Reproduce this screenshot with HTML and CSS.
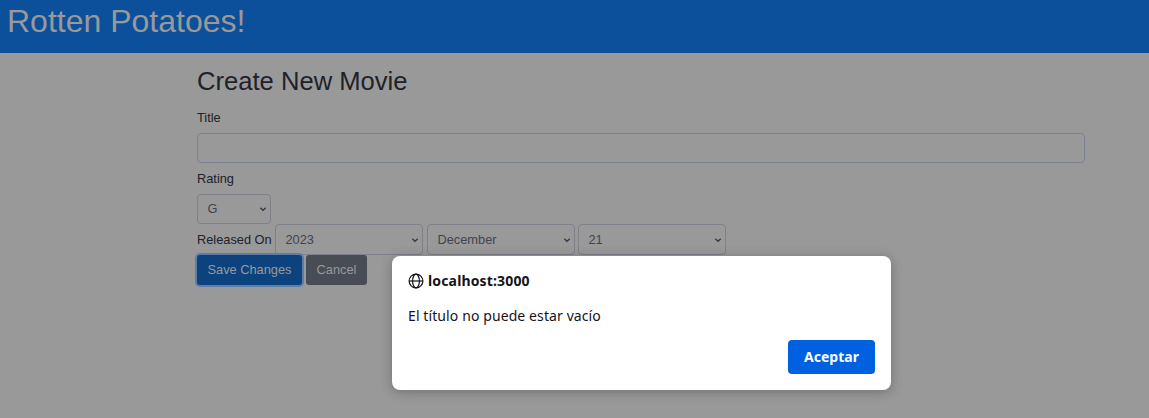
FILE: index.html
```html
<!DOCTYPE html>
<html lang="es">
<head>
<meta charset="utf-8">
<title>Rotten Potatoes!</title>
<link rel="stylesheet" href="styles.css">
</head>
<body>
<header class="banner"><h1 class="brand">Rotten Potatoes!</h1></header>
<main class="content">
  <h2 class="heading">Create New Movie</h2>
  <form class="form">
    <label class="label" for="title">Title</label>
    <input class="control title-input" id="title" type="text">
    <label class="label rating-label">Rating</label>
    <div class="control select rating"><span>G</span><svg class="chevron" viewBox="0 0 8 6"><path d="M1.3 1.7 4 4.3l2.7-2.6"/></svg></div>
    <div class="date-row">
      <span class="date-label">Released On</span>
      <div class="control select year"><span>2023</span><svg class="chevron" viewBox="0 0 8 6"><path d="M1.3 1.7 4 4.3l2.7-2.6"/></svg></div>
      <div class="control select month"><span>December</span><svg class="chevron" viewBox="0 0 8 6"><path d="M1.3 1.7 4 4.3l2.7-2.6"/></svg></div>
      <div class="control select day"><span>21</span><svg class="chevron" viewBox="0 0 8 6"><path d="M1.3 1.7 4 4.3l2.7-2.6"/></svg></div>
    </div>
    <div class="actions">
      <button class="btn save" type="button">Save Changes</button>
      <button class="btn cancel" type="button">Cancel</button>
    </div>
  </form>
</main>
<section class="dialog" role="alertdialog">
  <div class="origin">
    <svg class="globe" viewBox="0 0 16 16"><circle cx="8" cy="8" r="6.9"/><ellipse cx="8" cy="8" rx="3.4" ry="6.9"/><path d="M1.1 8h13.8"/></svg>
    <strong class="host">localhost:3000</strong>
  </div>
  <p class="message">El título no puede estar vacío</p>
  <button class="accept" type="button">Aceptar</button>
</section>
</body>
</html>
```
FILE: styles.css
```css
* { box-sizing: border-box; }
body {
  margin: 0;
  height: 418px;
  overflow: hidden;
  background: #99999a;
  color: #202229;
  font: 12.8px/19.2px "Liberation Sans", Arial, sans-serif;
}
.banner { height: 53px; padding: 2px 7px; background: #0c509c; }
.brand { margin: 0; font-size: 32px; line-height: 38px; font-weight: 400; color: #99999a; }
.content { width: 888px; margin-left: 197px; padding-top: 13px; }
.heading { margin: 0 0 11px; font-size: 25.6px; line-height: 31px; font-weight: 400; }
.form { display: flex; flex-direction: column; align-items: flex-start; }
.label { height: 25px; line-height: 20px; }
.control {
  height: 30px;
  border: 1px solid #7f808a;
  border-radius: 4px;
  background: #99999a;
  color: #40444d;
}
.title-input { width: 888px; padding: 0 10px; outline: none; border-color: #7b7f92; }
.rating-label { margin-top: 6px; }
.select { display: flex; align-items: center; justify-content: space-between; padding: 0 3px 0 9.5px; }
.chevron { width: 8px; height: 6px; fill: none; stroke: #34363e; stroke-width: 1.2; }
.rating { width: 74px; }
.date-row { display: flex; align-items: center; height: 31px; }
.date-row .control { height: 31px; }
.date-label { width: 78px; }
.year, .month, .day { width: 148px; }
.month { margin-left: 4px; }
.day { margin-left: 3px; }
.actions { display: flex; gap: 4px; }
.btn {
  height: 30px;
  padding: 0;
  border: 0;
  border-radius: 3px;
  color: #99999a;
  font: inherit;
}
.save { width: 105px; background: #0c437f; box-shadow: 0 0 0 2px #5d7da4; }
.cancel { width: 61px; background: #484c54; }
.dialog {
  position: absolute;
  left: 392px;
  top: 256px;
  width: 499px;
  height: 134px;
  padding: 16px;
  display: flex;
  flex-direction: column;
  border-radius: 8px;
  background: #fff;
  color: #15141a;
  box-shadow: 0 2px 12px rgba(20, 20, 26, .3);
  font-family: "Noto Sans", "Open Sans", sans-serif;
  font-size: 14px;
}
.origin { display: flex; align-items: center; gap: 4px; height: 18px; }
.globe { width: 16px; height: 16px; fill: none; stroke: #15141a; stroke-width: 1.2; }
.host { font-size: 14px; letter-spacing: .15px; }
.message { margin: 16px 0 0; height: 20px; line-height: 20px; letter-spacing: .1px; }
.accept {
  width: 87px;
  height: 34px;
  margin: 14px 0 0 auto;
  padding: 0 0 2px;
  border: 0;
  border-radius: 4px;
  background: #0061e0;
  color: #fbfbfe;
  font: 700 14px "Noto Sans", "Open Sans", sans-serif;
}
```
